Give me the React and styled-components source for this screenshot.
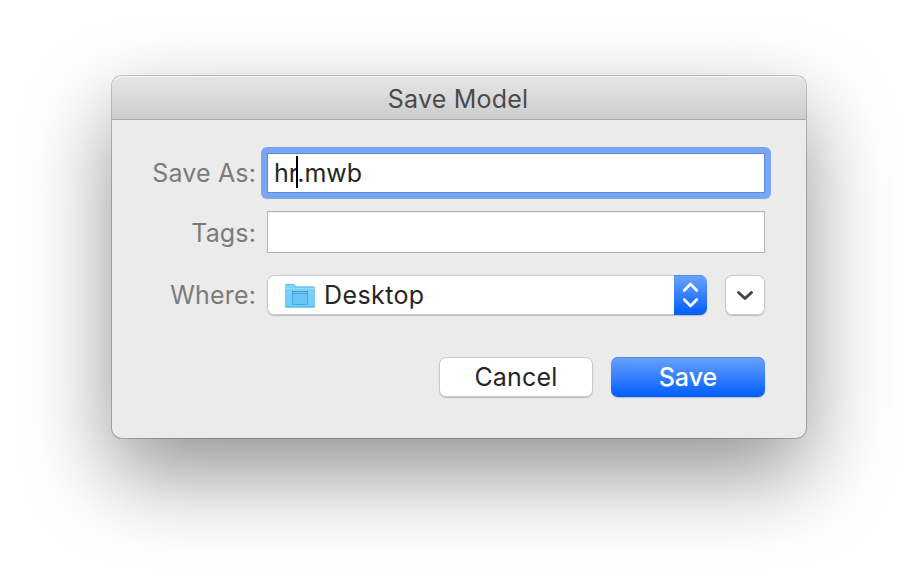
import React from "react";
import styled, { createGlobalStyle } from "styled-components";

const GlobalStyle = createGlobalStyle`
  * { box-sizing: border-box; }
  body { margin: 0; background: #fff; overflow: hidden; }
`;

const Desktop = styled.main`
  width: 918px;
  height: 586px;
  padding: 76px 112px;
  overflow: hidden;
  background: #fff;
  font-family: Inter, "Liberation Sans", sans-serif;
  font-size: 25px;
  color: #262626;
`;

const Dialog = styled.section`
  width: 694px;
  height: 362px;
  border-radius: 10px;
  background: #ebebeb;
  box-shadow: 0 0 0 1px rgba(0, 0, 0, 0.22), 0 36px 88px rgba(0, 0, 0, 0.43);
`;

const TitleBar = styled.header`
  height: 44px;
  display: flex;
  align-items: center;
  justify-content: center;
  padding: 2px 2px 0 0;
  border-radius: 10px 10px 0 0;
  border-bottom: 1px solid #a9a9a9;
  background: linear-gradient(#e6e6e6, #cdcdcd);
  box-shadow: inset 0 1px 0 #f5f5f5;
  color: #4b4b4b;
`;

const Text = styled.span`
  display: block;
  line-height: 30px;
  white-space: pre;
  letter-spacing: ${(p) => p.$track || 0}px;
  font-weight: ${(p) => p.$weight || 400};
`;

const Form = styled.div`
  display: grid;
  grid-template-columns: 144px 498px;
  grid-template-rows: 40px 42px 40px;
  column-gap: 11px;
  padding-top: 33px;
  row-gap: 18px;
`;

const WhereShift = styled.div`
  display: flex;
  gap: 18px;
  padding-top: 4px;
`;

const Label = styled.label`
  display: flex;
  align-items: center;
  justify-content: flex-end;
  color: #7b7b7b;
  padding-top: ${(p) => p.$drop || 0}px;
`;

const FocusRing = styled.div`
  display: grid;
  margin: -6px;
  padding: 6px;
  border-radius: 6px;
  background: #78a6f0;
`;

const Field = styled.div`
  display: flex;
  align-items: center;
  padding-left: 6px;
  background: #fff;
  border: 1px solid ${(p) => (p.$focused ? "#5a8bdc" : "#b2b2b2")};
  box-shadow: inset 0 1px 0 #f4f4f4;
`;

const Caret = styled.i`
  width: 2px;
  height: 32px;
  margin: 0 -1px 0 -2px;
  background: #000;
  position: relative;
  top: -1px;
`;

const control = "inset 0 0 0 1px #c9c9c9, 0 1px 1px rgba(0,0,0,.2)";

const Popup = styled.div`
  width: 440px;
  height: 40px;
  display: flex;
  align-items: center;
  border-radius: 7px;
  background: #fff;
  box-shadow: ${control};
  overflow: hidden;
  padding-left: 17px;
`;

const Stepper = styled.div`
  width: 33px;
  height: 40px;
  margin-left: auto;
  background: linear-gradient(#6ba2fb, #005dff);
  box-shadow: inset 0 1px 0 #4d8cf0;
`;

const Button = styled.button`
  width: ${(p) => p.$width}px;
  height: 40px;
  display: flex;
  align-items: center;
  justify-content: center;
  padding: 0;
  border: 0;
  border-radius: 7px;
  font: inherit;
  color: ${(p) => (p.$primary ? "#fff" : "#262626")};
  background: ${(p) => (p.$primary ? "linear-gradient(#6ba2fb, #005dff)" : "#fff")};
  box-shadow: ${(p) => (p.$primary ? "inset 0 1px 0 #4d8cf0, 0 1px 1px rgba(0,0,0,.22)" : control)};
`;

const Actions = styled.footer`
  display: flex;
  justify-content: flex-end;
  gap: 18px;
  padding: 46px 41px 0 0;
`;

const FolderIcon = styled.svg`
  width: 32px;
  height: 28px;
  margin-right: 8px;
  flex: none;
`;

function Folder() {
  return (
    <FolderIcon viewBox="0 0 32 28">
      <defs>
        <linearGradient id="folder" x1="0" y1="0" x2="0" y2="1">
          <stop offset="0" stopColor="#7ed2f8" />
          <stop offset="1" stopColor="#6fcbfa" />
        </linearGradient>
      </defs>
      <path d="M1 25V4.2Q1 3 2.2 3H9.5Q10.5 3 11 4L12 5.5H29.8Q31 5.5 31 6.7V25Q31 26.5 29.8 26.5H2.2Q1 26.5 1 25Z" fill="url(#folder)" />
      <path d="M1.5 4.2Q1.5 3.2 2.5 3.2H9.3Q10.3 3.2 10.8 4.2L11.8 5.9H30.5" fill="none" stroke="#68b9e0" strokeWidth=".8" />
      <path d="M1 7.5H31" stroke="#91dcfb" />
      <path d="M1.3 26H30.7" stroke="#53addb" />
      <path d="M8.5 10.5H23.5V23.5H8.5Z" fill="#68c5f4" stroke="#47a9dc" />
      <path d="M8 10.5H24" stroke="#3d9bd0" />
      <path d="M8 12.5H24" stroke="#47a4d8" />
      <path d="M10.5 11.5H21.5" stroke="#7acaf0" />
    </FolderIcon>
  );
}

export default function App() {
  return (
    <>
      <GlobalStyle />
      <Desktop>
        <Dialog>
          <TitleBar><Text $track={0.2}>Save Model</Text></TitleBar>
          <Form>
            <Label><Text $track={0.15}>Save As:</Text></Label>
            <FocusRing>
              <Field $focused>
                <Text>hr</Text><Caret /><Text>.mwb</Text>
              </Field>
            </FocusRing>
            <Label $drop={2}><Text $track={0.15}>Tags:</Text></Label>
            <Field />
            <Label $drop={8}><Text $track={0.15}>Where:</Text></Label>
            <WhereShift>
              <Popup>
                <Folder />
                <Text $track={0.4}>Desktop</Text>
                <Stepper>
                  <svg width="33" height="40" fill="none" stroke="#fff" strokeWidth="2.7" strokeLinecap="round" strokeLinejoin="round">
                    <path d="M10.2 15.5L16.5 9L22.8 15.5M10.2 24.5L16.5 31L22.8 24.5" />
                  </svg>
                </Stepper>
              </Popup>
              <Button $width={40} aria-label="Show more">
                <svg width="40" height="40" fill="none" stroke="#444" strokeWidth="3" strokeLinecap="round" strokeLinejoin="round">
                  <path d="M13.5 17.5L20 23.5L26.5 17.5" />
                </svg>
              </Button>
            </WhereShift>
          </Form>
          <Actions>
            <Button $width={154}><Text $track={0.2}>Cancel</Text></Button>
            <Button $width={154} $primary><Text $weight={500}>Save</Text></Button>
          </Actions>
        </Dialog>
      </Desktop>
    </>
  );
}
